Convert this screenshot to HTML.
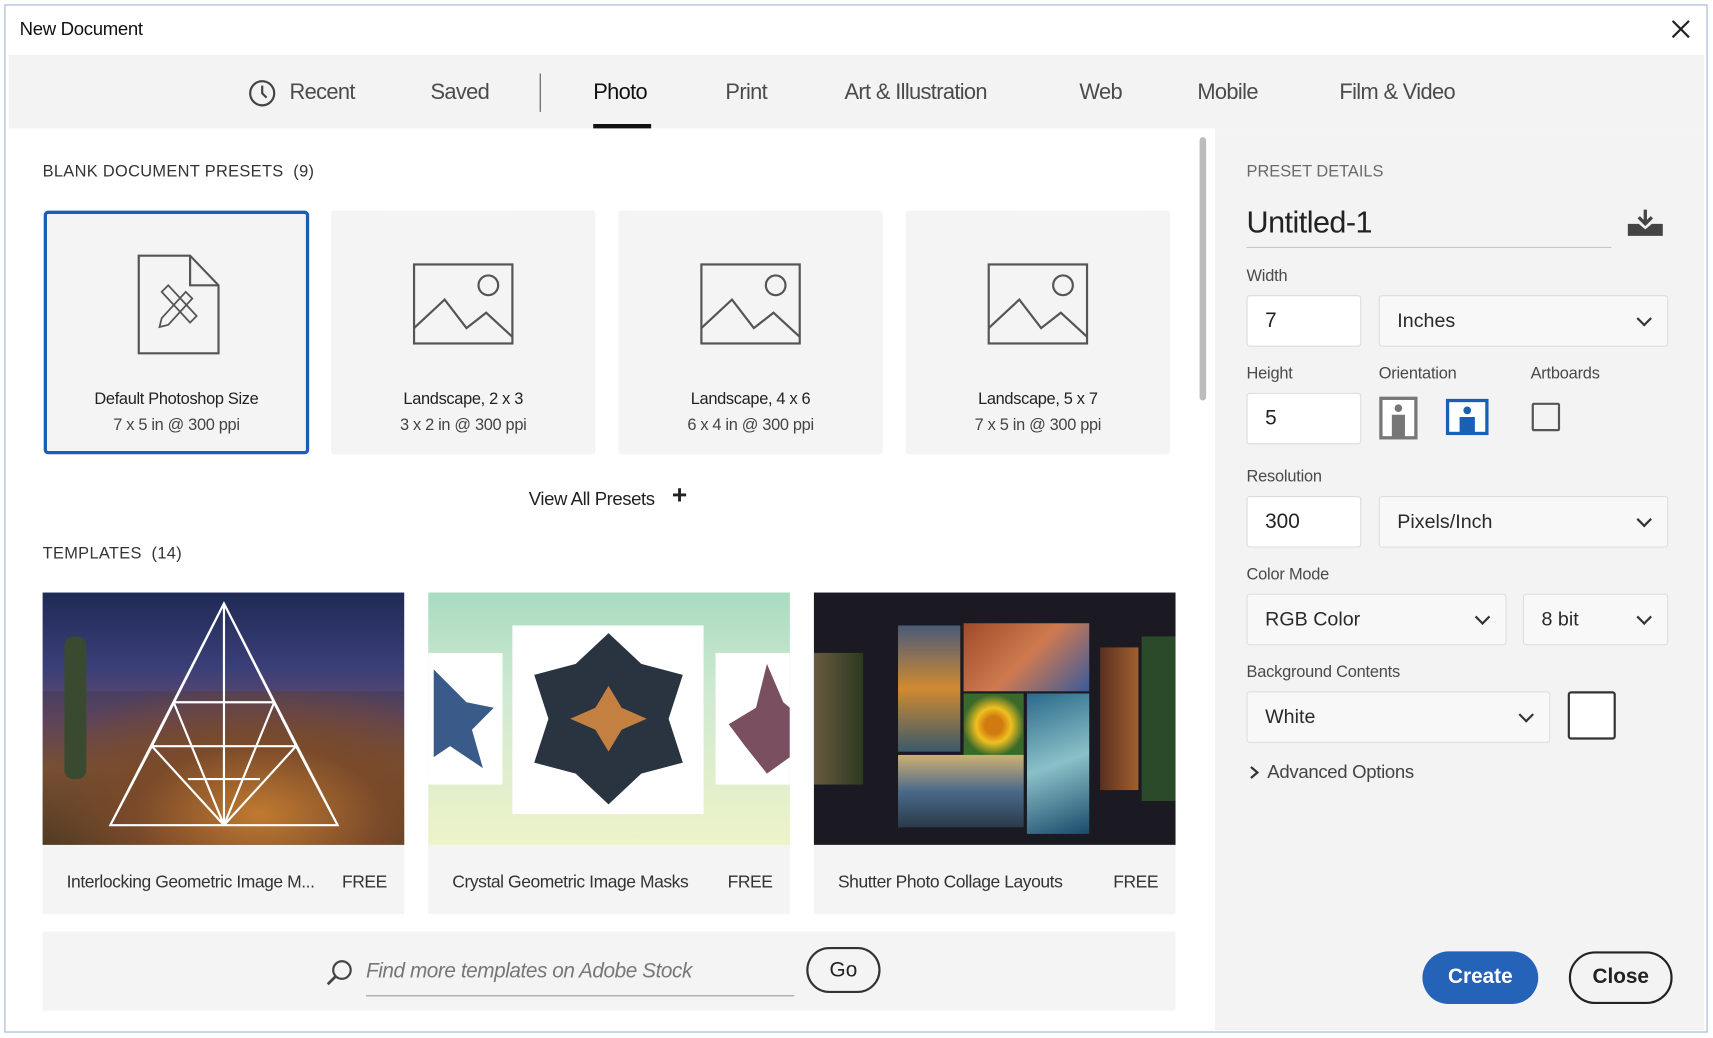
<!DOCTYPE html>
<html><head><meta charset="utf-8"><style>
html,body{margin:0;padding:0;width:1713px;height:1038px;overflow:hidden;background:#fff}
#w{position:absolute;left:0;top:0;width:1568px;height:946px;transform:scale(1.0925,1.0973);transform-origin:0 0;font-family:"Liberation Sans",sans-serif;color:#2c2c2c}
.a{position:absolute}
.tab{position:absolute;top:73px;font-size:20px;color:#4b4b4b;letter-spacing:-0.6px}
.card{position:absolute;top:192px;width:242px;height:222px;background:#f4f4f4;border-radius:3px;text-align:center}
.card .t1{position:absolute;top:163px;width:100%;font-size:15px;color:#222;letter-spacing:-0.3px}
.card .t2{position:absolute;top:187px;width:100%;font-size:15px;color:#444;letter-spacing:-0.3px}
.lbl{position:absolute;font-size:15px;color:#4a4a4a;letter-spacing:-0.2px}
.inp{position:absolute;background:#fff;border:1px solid #dcdcdc;border-radius:3px;font-size:19px;color:#222;box-sizing:border-box;padding-left:16px}
.sel{position:absolute;background:#f8f8f8;border:1px solid #dedede;border-radius:3px;font-size:18px;color:#2a2a2a;box-sizing:border-box;padding-left:16px}
.chev{position:absolute;right:16px;top:50%;width:8px;height:8px;border-right:2px solid #333;border-bottom:2px solid #333;transform:translateY(-75%) rotate(45deg)}
.cap{position:absolute;top:770px;height:63px;background:#f4f4f4;font-size:16px;color:#333;letter-spacing:-0.4px}
.cap span{position:absolute;top:26px}
</style></head><body><div id="w">
<div class="a" style="left:4px;top:4px;width:1557px;height:935px;border:1px solid #9db6d6"></div>
<div class="a" style="left:18px;top:17px;font-size:17px;color:#111;letter-spacing:-0.3px">New Document</div>
<svg class="a" style="left:1530px;top:18px" width="17" height="17" viewBox="0 0 17 17"><path d="M1 1L16 16M16 1L1 16" stroke="#222" stroke-width="2"/></svg>
<div class="a" style="left:8px;top:50px;width:1552px;height:67px;background:#f3f3f3"></div>
<svg class="a" style="left:227px;top:72px" width="26" height="26" viewBox="0 0 26 26"><circle cx="13" cy="13" r="11" fill="none" stroke="#444" stroke-width="2"/><path d="M13 6V13L17 17" fill="none" stroke="#444" stroke-width="2"/></svg>
<div class="tab" style="left:265px">Recent</div>
<div class="tab" style="left:394px">Saved</div>
<div class="a" style="left:494px;top:67px;width:1px;height:35px;background:#555"></div>
<div class="tab" style="left:543px;color:#111">Photo</div>
<div class="a" style="left:543px;top:113px;width:53px;height:4px;background:#111"></div>
<div class="tab" style="left:664px">Print</div>
<div class="tab" style="left:773px">Art &amp; Illustration</div>
<div class="tab" style="left:988px">Web</div>
<div class="tab" style="left:1096px">Mobile</div>
<div class="tab" style="left:1226px">Film &amp; Video</div>
<div class="a" style="left:1098px;top:125px;width:6px;height:240px;background:#bcbcbc;border-radius:3px"></div>
<div class="a" style="left:1112px;top:117px;width:448px;height:822px;background:#f3f3f3"></div>
<div class="a" style="left:39px;top:148px;font-size:15px;color:#333;letter-spacing:0.3px">BLANK DOCUMENT PRESETS &nbsp;(9)</div>
<div class="card" style="left:40px;border:3px solid #1a5fb4;width:237px;height:216px;top:192px;border-radius:4px">
<svg class="a" style="left:81px;top:35px" width="78" height="95" viewBox="0 0 78 95"><path d="M3 3H50L76 30V92H3Z M50 3V30H76" fill="none" stroke="#555" stroke-width="2"/><g fill="none" stroke="#555" stroke-width="1.6"><path d="M24 36L30 30L56 58L50 64Z"/><path d="M46 36L52 42L30 66L22 68L24 60Z"/></g></svg>
<div class="t1" style="top:160px">Default Photoshop Size</div><div class="t2" style="top:184px">7 x 5 in @ 300 ppi</div></div>
<div class="card" style="left:303px"><svg class="a" style="left:74px;top:47px" width="94" height="76" viewBox="0 0 94 76"><rect x="2" y="2" width="90" height="72" fill="none" stroke="#555" stroke-width="2"/><circle cx="70" cy="21" r="9" fill="none" stroke="#555" stroke-width="2"/><path d="M2 60L30 34L50 60L68 46L92 68" fill="none" stroke="#555" stroke-width="2"/></svg><div class="t1">Landscape, 2 x 3</div><div class="t2">3 x 2 in @ 300 ppi</div></div>
<div class="card" style="left:566px"><svg class="a" style="left:74px;top:47px" width="94" height="76" viewBox="0 0 94 76"><rect x="2" y="2" width="90" height="72" fill="none" stroke="#555" stroke-width="2"/><circle cx="70" cy="21" r="9" fill="none" stroke="#555" stroke-width="2"/><path d="M2 60L30 34L50 60L68 46L92 68" fill="none" stroke="#555" stroke-width="2"/></svg><div class="t1">Landscape, 4 x 6</div><div class="t2">6 x 4 in @ 300 ppi</div></div>
<div class="card" style="left:829px"><svg class="a" style="left:74px;top:47px" width="94" height="76" viewBox="0 0 94 76"><rect x="2" y="2" width="90" height="72" fill="none" stroke="#555" stroke-width="2"/><circle cx="70" cy="21" r="9" fill="none" stroke="#555" stroke-width="2"/><path d="M2 60L30 34L50 60L68 46L92 68" fill="none" stroke="#555" stroke-width="2"/></svg><div class="t1">Landscape, 5 x 7</div><div class="t2">7 x 5 in @ 300 ppi</div></div>
<div class="a" style="left:484px;top:445px;font-size:17px;color:#222;letter-spacing:-0.4px">View All Presets</div>
<div class="a" style="left:615px;top:438px;font-size:24px;font-weight:bold;color:#222">+</div>
<div class="a" style="left:39px;top:496px;font-size:15px;color:#333;letter-spacing:0.3px">TEMPLATES &nbsp;(14)</div>
<div class="a" style="left:39px;top:540px;width:331px;height:230px;overflow:hidden;background:linear-gradient(180deg,#1f2a55 0%,#3b3f78 30%,#6a4a6a 50%,#8a5a3a 70%,#4a3a20 100%)">
<div class="a" style="left:0;top:90px;width:331px;height:140px;background:radial-gradient(ellipse at 60% 80%,#c07a30 0%,#7a4a2a 40%,rgba(40,40,30,0.2) 80%)"></div>
<div class="a" style="left:20px;top:40px;width:20px;height:130px;background:#3a4a30;border-radius:8px"></div>
<svg class="a" style="left:0;top:0" width="331" height="230"><path d="M166 10L62 212H270Z M166 10L166 212 M166 10L100 140H232L166 10 M100 140L166 212L232 140 M100 140L62 212 M232 140L270 212 M120 100H212 M120 100L166 212 M212 100L166 212 M133 170H199" fill="none" stroke="#fff" stroke-width="2"/></svg></div>
<div class="cap" style="left:39px;width:331px"><span style="left:22px">Interlocking Geometric Image M...</span><span style="left:274px">FREE</span></div>
<div class="a" style="left:392px;top:540px;width:331px;height:230px;overflow:hidden;background:linear-gradient(180deg,#a8dcc0 0%,#cfe9d2 40%,#eef3c8 100%)">
<div class="a" style="left:77px;top:30px;width:175px;height:172px;background:#fff"></div>
<div class="a" style="left:0;top:55px;width:68px;height:120px;background:#fff"></div>
<div class="a" style="left:263px;top:55px;width:68px;height:120px;background:#fff"></div>
<svg class="a" style="left:95px;top:35px" width="140" height="160" viewBox="0 0 140 160"><path d="M70 2L100 30L138 40L125 80L138 120L100 130L70 158L40 130L2 120L15 80L2 40L40 30Z" fill="#2a3440"/><path d="M70 50L82 70L105 80L82 90L70 110L58 90L35 80L58 70Z" fill="#c48040"/></svg>
<svg class="a" style="left:0;top:60px" width="70" height="110"><path d="M5 10L35 40L60 45L40 65L50 100L20 80L5 90Z" fill="#3a5a8a"/></svg>
<svg class="a" style="left:270px;top:60px" width="61" height="110"><path d="M40 5L55 40L61 45V90L40 105L20 80L5 60L30 45Z" fill="#7a5060"/></svg></div>
<div class="cap" style="left:392px;width:331px"><span style="left:22px">Crystal Geometric Image Masks</span><span style="left:274px">FREE</span></div>
<div class="a" style="left:745px;top:540px;width:331px;height:230px;overflow:hidden;background:#1b1a22">
<div class="a" style="left:0;top:55px;width:45px;height:120px;background:linear-gradient(90deg,#6a5a40,#2a3a20)"></div>
<div class="a" style="left:77px;top:30px;width:57px;height:115px;background:linear-gradient(180deg,#4a5a7a,#d08a30,#3a5a6a)"></div>
<div class="a" style="left:137px;top:28px;width:115px;height:62px;background:linear-gradient(135deg,#a04a2a,#d07a50,#3a5a9a)"></div>
<div class="a" style="left:137px;top:92px;width:55px;height:58px;background:radial-gradient(circle,#d07a10 20%,#f0c020 40%,#3a6a2a 70%)"></div>
<div class="a" style="left:195px;top:92px;width:57px;height:128px;background:linear-gradient(160deg,#2a6a8a,#8ac0c8,#1a4a6a)"></div>
<div class="a" style="left:77px;top:148px;width:115px;height:66px;background:linear-gradient(180deg,#d0b070,#4a6a8a 50%,#2a3a4a)"></div>
<div class="a" style="left:262px;top:50px;width:35px;height:130px;background:linear-gradient(90deg,#5a3020,#a06030)"></div>
<div class="a" style="left:300px;top:40px;width:31px;height:150px;background:#2a4a2a"></div></div>
<div class="cap" style="left:745px;width:331px"><span style="left:22px">Shutter Photo Collage Layouts</span><span style="left:274px">FREE</span></div>
<div class="a" style="left:39px;top:849px;width:1037px;height:72px;background:#f4f4f4"></div>
<svg class="a" style="left:298px;top:874px" width="26" height="26" viewBox="0 0 26 26"><circle cx="15" cy="10" r="8" fill="none" stroke="#444" stroke-width="2"/><path d="M9 16L2 23" stroke="#444" stroke-width="2.5"/></svg>
<div class="a" style="left:335px;top:875px;font-size:19px;font-style:italic;color:#777;letter-spacing:-0.4px">Find more templates on Adobe Stock</div>
<div class="a" style="left:335px;top:907px;width:392px;height:1px;background:#999"></div>
<div class="a" style="left:738px;top:863px;width:68px;height:42px;border:2px solid #333;border-radius:23px;box-sizing:border-box;text-align:center;line-height:40px;font-size:19px;color:#222">Go</div>
<div class="a" style="left:1141px;top:148px;font-size:15px;color:#6a6a6a">PRESET DETAILS</div>
<div class="a" style="left:1141px;top:187px;font-size:28px;color:#222;letter-spacing:-0.5px">Untitled-1</div>
<div class="a" style="left:1141px;top:225px;width:334px;height:1px;background:#c8c8c8"></div>
<svg class="a" style="left:1488px;top:190px" width="36" height="26" viewBox="0 0 36 26"><path d="M18 1V13M12 8L18 14L24 8" fill="none" stroke="#444" stroke-width="3"/><path d="M2 14H12L18 19L24 14H34V25H2Z" fill="#444"/></svg>
<div class="lbl" style="left:1141px;top:243px">Width</div>
<div class="inp" style="left:1141px;top:269px;width:105px;height:47px;line-height:45px">7</div>
<div class="sel" style="left:1262px;top:269px;width:265px;height:47px;line-height:45px">Inches<i class="chev"></i></div>
<div class="lbl" style="left:1141px;top:332px">Height</div>
<div class="lbl" style="left:1262px;top:332px">Orientation</div>
<div class="lbl" style="left:1401px;top:332px">Artboards</div>
<div class="inp" style="left:1141px;top:358px;width:105px;height:47px;line-height:45px">5</div>
<svg class="a" style="left:1262px;top:361px" width="36" height="40" viewBox="0 0 36 40"><rect x="2" y="2" width="32" height="36" fill="#fff" stroke="#777" stroke-width="3"/><circle cx="18" cy="11" r="3.5" fill="#777"/><path d="M12 17H24V38H12Z" fill="#777"/></svg>
<svg class="a" style="left:1323px;top:363px" width="40" height="34" viewBox="0 0 40 34"><rect x="2" y="2" width="36" height="30" fill="#fff" stroke="#1a5fb4" stroke-width="3"/><circle cx="20" cy="11" r="3.5" fill="#1a5fb4"/><path d="M13 17H27V32H13Z" fill="#1a5fb4"/></svg>
<div class="a" style="left:1402px;top:367px;width:22px;height:22px;border:2px solid #555;border-radius:2px"></div>
<div class="lbl" style="left:1141px;top:426px">Resolution</div>
<div class="inp" style="left:1141px;top:452px;width:105px;height:47px;line-height:45px">300</div>
<div class="sel" style="left:1262px;top:452px;width:265px;height:47px;line-height:45px">Pixels/Inch<i class="chev"></i></div>
<div class="lbl" style="left:1141px;top:515px">Color Mode</div>
<div class="sel" style="left:1141px;top:541px;width:238px;height:47px;line-height:45px">RGB Color<i class="chev"></i></div>
<div class="sel" style="left:1394px;top:541px;width:133px;height:47px;line-height:45px">8 bit<i class="chev"></i></div>
<div class="lbl" style="left:1141px;top:604px">Background Contents</div>
<div class="sel" style="left:1141px;top:630px;width:278px;height:47px;line-height:45px">White<i class="chev"></i></div>
<div class="a" style="left:1435px;top:630px;width:44px;height:44px;border:2px solid #333;border-radius:3px;background:#fff;box-sizing:border-box"></div>
<svg class="a" style="left:1143px;top:697px" width="10" height="14" viewBox="0 0 10 14"><path d="M2 2L8 7L2 12" fill="none" stroke="#333" stroke-width="2"/></svg>
<div class="a" style="left:1160px;top:694px;font-size:17px;color:#444;letter-spacing:-0.3px">Advanced Options</div>
<div class="a" style="left:1302px;top:867px;width:106px;height:48px;border-radius:24px;background:#2563b8;color:#fff;font-weight:bold;font-size:19px;text-align:center;line-height:48px">Create</div>
<div class="a" style="left:1436px;top:867px;width:95px;height:48px;border-radius:24px;border:2px solid #222;box-sizing:border-box;color:#222;font-weight:bold;font-size:19px;text-align:center;line-height:44px">Close</div>
</div></body></html>
